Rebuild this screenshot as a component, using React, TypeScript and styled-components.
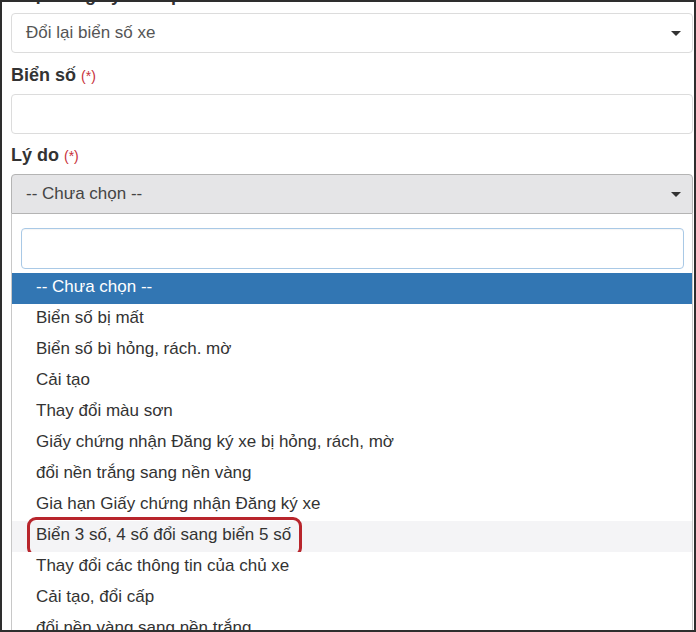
import React from "react";
import styled, { createGlobalStyle } from "styled-components";

const Global = createGlobalStyle`
  html, body { margin: 0; padding: 0; background: #2e2e2e; }
  body { font-family: "Liberation Sans", Arial, sans-serif; }
  * { box-sizing: border-box; }
`;

const Frame = styled.div`
  width: 696px;
  height: 632px;
  border: 2px solid #2e2e2e;
  background: #fff;
  overflow: hidden;
  padding: 0 1px 0 9px;
  color: #333;
`;

const Label = styled.div<{ $top?: number; $bottom?: number }>`
  font-size: 18px;
  font-weight: bold;
  line-height: 22px;
  height: 22px;
  color: #333;
  margin-top: ${(p) => p.$top ?? 10}px;
  margin-bottom: ${(p) => p.$bottom ?? 8}px;
  white-space: nowrap;
`;

const Req = styled.span`
  font-size: 14px;
  font-weight: normal;
  color: #c7303a;
  margin-left: 5px;
`;

const SelectBox = styled.div<{ $open?: boolean }>`
  height: 40px;
  display: flex;
  align-items: center;
  justify-content: space-between;
  padding: 0 11px 0 14px;
  border: 1px solid ${(p) => (p.$open ? "#b4b4b4" : "#dcdcdc")};
  border-radius: ${(p) => (p.$open ? "4px 4px 0 0" : "4px")};
  background: ${(p) => (p.$open ? "#e5e5e7" : "#fff")};
  font-size: 17px;
  color: ${(p) => (p.$open ? "#444" : "#555")};
`;

const Caret = styled.span`
  width: 0;
  height: 0;
  border-left: 5px solid transparent;
  border-right: 5px solid transparent;
  border-top: 5px solid #333;
`;

const TextInput = styled.div`
  height: 40px;
  border: 1px solid #dcdcdc;
  border-radius: 4px;
  background: #fff;
`;

const Dropdown = styled.div`
  border: 1px solid #c8c8c8;
  border-top: none;
  background: #fff;
`;

const SearchWrap = styled.div`
  padding: 14px 8px 4px 9px;
`;

const SearchInput = styled.div`
  height: 41px;
  border: 1px solid #a9c9e6;
  border-radius: 4px;
  background: #fff;
  box-shadow: inset 0 1px 1px rgba(0, 0, 0, 0.04);
`;

const Option = styled.div<{ $active?: boolean; $hover?: boolean }>`
  position: relative;
  height: 31px;
  padding: 3px 0 0 24px;
  line-height: 21px;
  font-size: 17px;
  white-space: nowrap;
  color: ${(p) => (p.$active ? "#fff" : "#333")};
  background: ${(p) => (p.$active ? "#3276b3" : p.$hover ? "#f4f4f6" : "#fff")};
`;

const Highlight = styled.div`
  position: absolute;
  left: 15px;
  top: -4px;
  width: 275px;
  height: 40px;
  border: 3px solid #b8252c;
  border-radius: 9px;
  pointer-events: none;
`;

const options = [
  "Biển số bị mất",
  "Biển số bì hỏng, rách. mờ",
  "Cải tạo",
  "Thay đổi màu sơn",
  "Giấy chứng nhận Đăng ký xe bị hỏng, rách, mờ",
  "đổi nền trắng sang nền vàng",
  "Gia hạn Giấy chứng nhận Đăng ký xe",
  "Biển 3 số, 4 số đổi sang biển 5 số",
  "Thay đổi các thông tin của chủ xe",
  "Cải tạo, đổi cấp",
  "đổi nền vàng sang nền trắng",
];

export default function App() {
  return (
    <>
      <Global />
      <Frame>
        <Label $top={-18} $bottom={7}>
          Loại đăng ký xe cấp
        </Label>
        <SelectBox>
          <span>Đổi lại biển số xe</span>
          <Caret />
        </SelectBox>
        <Label $top={11}>
          Biển số<Req>(*)</Req>
        </Label>
        <TextInput />
        <Label $top={10}>
          Lý do<Req>(*)</Req>
        </Label>
        <SelectBox $open>
          <span>-- Chưa chọn --</span>
          <Caret />
        </SelectBox>
        <Dropdown>
          <SearchWrap>
            <SearchInput />
          </SearchWrap>
          <Option $active>-- Chưa chọn --</Option>
          {options.map((o, i) => (
            <Option key={o} $hover={i === 7}>
              {o}
              {i === 7 && <Highlight />}
            </Option>
          ))}
        </Dropdown>
      </Frame>
    </>
  );
}
